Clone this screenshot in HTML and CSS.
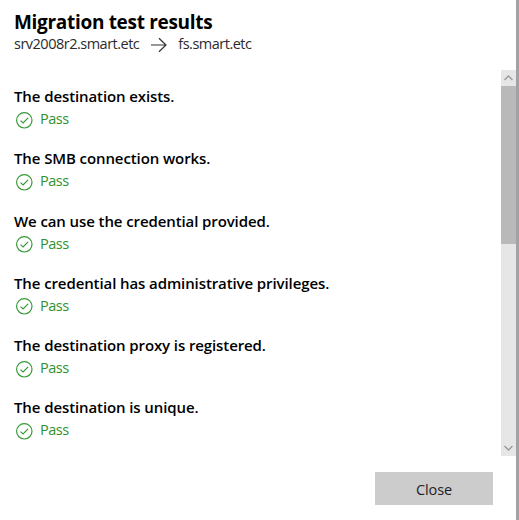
FILE: index.html
```html
<!DOCTYPE html>
<html lang="en">
<head>
<meta charset="utf-8">
<title>Migration test results</title>
<link rel="stylesheet" href="styles.css">
</head>
<body>
<svg width="0" height="0" class="defs">
  <symbol id="check" viewBox="0 0 18 18">
    <circle cx="9.3" cy="9.3" r="7.7"/>
    <path d="M5.5 9.6 8.1 12 13.1 6.9"/>
  </symbol>
</svg>
<main class="panel">
  <header class="header">
    <h1 class="title"><span>Migration test results</span></h1>
    <div class="route">
      <span class="source">srv2008r2.smart.etc</span>
      <svg class="arrow" viewBox="0 0 18 16"><path d="M1 8H16M9 1.2 16 8 9 14.8"/></svg>
      <span class="target">fs.smart.etc</span>
    </div>
  </header>
  <section class="body">
    <ul class="results">
      <li class="result"><h2 class="name">The destination exists.</h2><div class="status"><svg class="check"><use href="#check"/></svg><span>Pass</span></div></li>
      <li class="result"><h2 class="name">The SMB connection works.</h2><div class="status"><svg class="check"><use href="#check"/></svg><span>Pass</span></div></li>
      <li class="result"><h2 class="name">We can use the credential provided.</h2><div class="status"><svg class="check"><use href="#check"/></svg><span>Pass</span></div></li>
      <li class="result"><h2 class="name">The credential has administrative privileges.</h2><div class="status"><svg class="check"><use href="#check"/></svg><span>Pass</span></div></li>
      <li class="result"><h2 class="name">The destination proxy is registered.</h2><div class="status"><svg class="check"><use href="#check"/></svg><span>Pass</span></div></li>
      <li class="result"><h2 class="name">The destination is unique.</h2><div class="status"><svg class="check"><use href="#check"/></svg><span>Pass</span></div></li>
    </ul>
    <div class="scrollbar">
      <svg class="chevron" viewBox="0 0 15 16"><path d="M3.5 10 7.5 6 11.5 10"/></svg>
      <div class="thumb"></div>
      <svg class="chevron down" viewBox="0 0 15 16"><path d="M3.5 6 7.5 10 11.5 6"/></svg>
    </div>
  </section>
  <footer class="footer"><button class="close">Close</button></footer>
</main>
</body>
</html>
```
FILE: styles.css
```css
* { box-sizing: border-box; }
body {
  margin: 0;
  background: #fff;
  color: #000;
  font-family: "Open Sans", "Noto Sans", sans-serif;
}
.defs { position: absolute; }
.panel {
  display: flex;
  flex-direction: column;
  width: 519px;
  height: 520px;
  border-right: 3px solid #a2a2a4;
  overflow: hidden;
}
.header { height: 70px; padding: 10px 0 0 14px; }
.title {
  margin: 0;
  font-size: 19px;
  line-height: 24px;
  font-weight: 700;
  letter-spacing: -0.31px;
  white-space: nowrap;
}
.route {
  display: flex;
  align-items: center;
  height: 20px;
  font-size: 14.5px;
  letter-spacing: -0.5px;
  color: #2b2b2b;
}
.route span { margin-top: -1px; }
.arrow { width: 18px; height: 16px; margin: 1px 10px 0 11px; }
.arrow path { fill: none; stroke: #333; stroke-width: 1.2; }
.body { display: flex; justify-content: space-between; height: 386px; }
.results { list-style: none; margin: 0; padding: 16px 0 0 14px; }
.result { height: 62.3px; white-space: nowrap; }
.name {
  margin: 0;
  font-size: 15px;
  line-height: 20px;
  font-weight: 600;
  letter-spacing: -0.1px;
}
.status {
  display: flex;
  align-items: center;
  height: 24px;
  padding-left: 1px;
  font-size: 14.5px;
  letter-spacing: -0.5px;
  color: #2f922f;
}
.status span { margin-top: 1px; }
.check {
  width: 18px;
  height: 18px;
  margin: 3px 7px 0 0;
  fill: none;
  stroke: #379837;
  stroke-width: 1.2;
}
.scrollbar {
  display: flex;
  flex-direction: column;
  width: 15px;
  background: #e6e6e6;
}
.chevron {
  width: 15px;
  height: 16px;
  fill: none;
  stroke: #999;
  stroke-width: 1.3;
}
.down { margin-top: auto; }
.thumb { height: 158px; background: #b9b9b9; }
.footer { display: flex; justify-content: flex-end; padding: 16px 23px 0 0; }
.close {
  width: 118px;
  height: 33px;
  padding: 2px 0 0;
  border: 0;
  background: #ccc;
  color: #222;
  font: 14.5px "Open Sans", "Noto Sans", sans-serif;
  letter-spacing: -0.1px;
}
```
